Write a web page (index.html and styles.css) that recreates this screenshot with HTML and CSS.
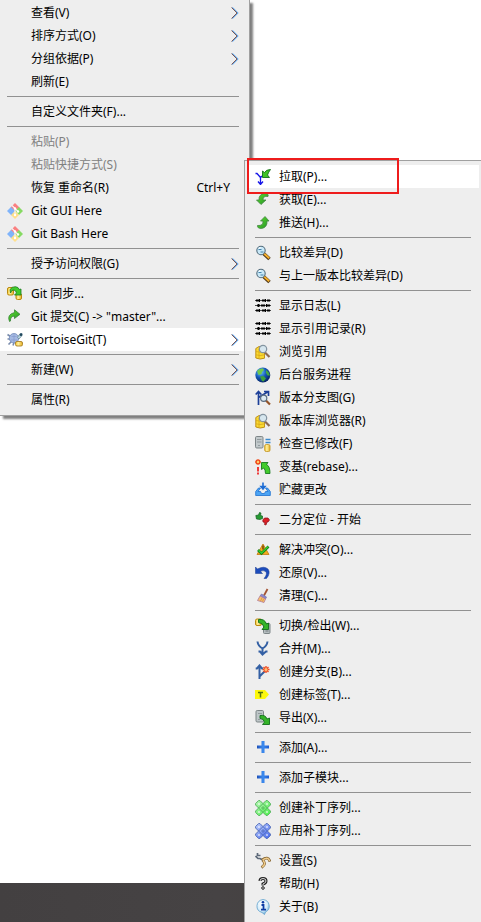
FILE: index.html
```html
<!DOCTYPE html>
<html lang="zh-Hans">
<head>
  <meta charset="UTF-8">
  <meta name="viewport" content="width=device-width, initial-scale=1.0">
  <title>TortoiseGit</title>
  <link rel="stylesheet" href="styles.css">
</head>
<body>
  <!-- icon set -->
  <svg class="sprite" aria-hidden="true">
    <defs>
      <linearGradient id="gGreen" x1="0" y1="0" x2="1" y2="1">
        <stop offset="0" stop-color="#5ee02a"/><stop offset="1" stop-color="#24912a"/>
      </linearGradient>
      <linearGradient id="gGold" x1="0" x2="1">
        <stop offset="0" stop-color="#f5c52c"/><stop offset=".4" stop-color="#fff0a0"/><stop offset="1" stop-color="#e6ae1c"/>
      </linearGradient>
      <linearGradient id="gBlue" x1="0" x2="1">
        <stop offset="0" stop-color="#1d50b8"/><stop offset=".5" stop-color="#3d8cf0"/><stop offset="1" stop-color="#1d5cd0"/>
      </linearGradient>
      <radialGradient id="gGlobe" cx=".35" cy=".3" r=".75">
        <stop offset="0" stop-color="#6cc8ff"/><stop offset=".5" stop-color="#1458b8"/><stop offset="1" stop-color="#06205c"/>
      </radialGradient>
      <radialGradient id="gBall" cx=".4" cy=".3" r=".75">
        <stop offset="0" stop-color="#fff"/><stop offset=".6" stop-color="#d4ecfa"/><stop offset="1" stop-color="#5fa4d4"/>
      </radialGradient>
      <linearGradient id="gPatchG" x1="0" y1="0" x2="1" y2="1">
        <stop offset="0" stop-color="#b8f4b8"/><stop offset="1" stop-color="#4cf04c"/>
      </linearGradient>
      <linearGradient id="gPatchB" x1="0" y1="0" x2="1" y2="1">
        <stop offset="0" stop-color="#c0d0fc"/><stop offset="1" stop-color="#4468ec"/>
      </linearGradient>
    </defs>

    <symbol id="arrow" viewBox="0 0 8 12">
      <path d="M1.200 .5 6.800 6 1.200 11.500" fill="none" stroke="#5fa8ee" stroke-width="1.200"/>
      <path d="M.5 .5 6 6 .5 11.500" fill="none" stroke="#7c3c28" stroke-width=".8"/>
    </symbol>

    <symbol id="git" viewBox="0 0 16 16">
      <path d="M8 0 12.500 4.500 8 8 3.500 4.500z" fill="#fa8080"/>
      <path d="M4 4 8 8 4.500 12.500 0 8z" fill="#80b4fa"/>
      <path d="M12 4 16 8 12 12 8 8z" fill="#86da62"/>
      <path d="M8 8 12 12 8 16 4 12z" fill="#ffe08c"/>
      <path d="M5 2.500 11 8.500M8 6v6.500" stroke="#f4f4f4" stroke-width="1.100"/>
      <circle cx="8" cy="5.500" r="1.200" fill="#fff"/><circle cx="11" cy="8.500" r="1.200" fill="#fff"/><circle cx="8" cy="12" r="1.200" fill="#fff"/>
    </symbol>
    <symbol id="sync" viewBox="0 0 16 16">
      <rect x=".5" y="1.500" width="6" height="7.500" rx="1.500" fill="url(#gGold)" stroke="#b88a10"/>
      <rect x="9" y="7.500" width="5.500" height="6" rx="1.500" fill="url(#gGold)" stroke="#b88a10"/>
      <path d="M3 3.500Q5 .5 8.500 .7 11.500 1 12.300 3.500L14 3v6H7.500l2-2Q9 4.500 7 4 4.500 3.500 3.500 7z" fill="#42cc2c" stroke="#187a20" stroke-width=".8"/>
    </symbol>
    <symbol id="commit" viewBox="0 0 16 16">
      <path d="M2.500 12.500Q-.5 5.500 7.500 3.500V.8L13 5.300 7.500 9.500V7Q3 7.500 3.500 12z" fill="url(#gGreen)" stroke="#3b843b" stroke-width=".8"/>
    </symbol>
    <symbol id="tortoise" viewBox="0 0 16 16">
      <path d="M.5 2.500 3.500 4.500M.5 7h3M1.500 12.500l3-3M6 13.500l1-3M10 11l-1-2" stroke="#7a8cac" stroke-width="1.600"/>
      <circle cx="7" cy="6.200" r="4.700" fill="#a5b9e2" stroke="#7088b8" stroke-width=".8"/>
      <path d="M4.500 4.500h5M4 8h6M7 2.500v8" stroke="#869cce" stroke-width=".7"/>
      <path d="M10.500 5.500Q12 1.500 15 1.500 16 3.500 12 7z" fill="#b4d4de" stroke="#6a8494" stroke-width=".7"/>
      <circle cx="14" cy="2.700" r="1.400" fill="#20485c"/>
      <rect x="8.500" y="9.500" width="7" height="4.500" rx="1.500" fill="url(#gGold)" stroke="#a88028" stroke-width=".9"/>
    </symbol>
    <symbol id="pull" viewBox="0 0 16 16">
      <path d="M.5 4.500H2l3.500 4 3.500-3M5.500 8.500v7M3 12.500l2.500 3 2.500-3" fill="none" stroke="#1616e8" stroke-width="1.300"/>
      <path d="M7.500 2 9.500 3.500Q11 .7 15.500 .5 13.500 3 12.500 6L14.500 8.500H7.500z" fill="#3fc424" stroke="#14701a" stroke-width=".9"/>
    </symbol>
    <symbol id="fetch" viewBox="0 0 16 16">
      <path d="M4 8Q3.500 2 10 1.500 14 1.500 13 4.500 8 3.500 8 8H11L6 12.500 1.500 8z" fill="url(#gGreen)" stroke="#448444" stroke-width=".8"/>
    </symbol>
    <symbol id="push" viewBox="0 0 16 16">
      <path d="M8 6H5.500L10 1.500 14 6H12Q12.500 12.500 6.500 13.500 2 13.500 2.500 10.500 8.500 11 8 6z" fill="url(#gGreen)" stroke="#448444" stroke-width=".8"/>
    </symbol>
    <symbol id="diff" viewBox="0 0 16 16">
      <path d="M8.500 8.500 14.500 14" stroke="#503818" stroke-width="3.600"/>
      <path d="M9 8.500 14.200 13.200" stroke="#f6b02c" stroke-width="1.900"/>
      <circle cx="6" cy="5.500" r="4.200" fill="#c8e8f8" stroke="#526c7c" stroke-width="1.100"/>
      <path d="M3.500 4.500h3M5.500 7h3" stroke="#4484ac"/>
      <path d="M4 3.500 5.500 2.500" stroke="#fff" stroke-width="1.500"/>
    </symbol>
    <symbol id="log" viewBox="0 0 16 16">
      <path d="M0 2.500h16M0 7.500h16M0 12.500h16" stroke="#4a4a4a"/>
      <path d="M1 2.500h4M7 2.500h3M12 2.500h3M2 7.500h3M6 7.500h4M12 7.500h3M1 12.500h4M7 12.500h3M12 12.500h3" stroke="#000" stroke-width="2"/>
      <path d="M4.500 1v3M10.500 1v3M3.500 6v3M11.500 6v3M4.500 11v3M10.500 11v3" stroke="#000"/>
    </symbol>
    <symbol id="browse" viewBox="0 0 16 16">
      <path d="M.8 4.500 4 2.500h5.500v11.700Q5 16 .8 14z" fill="#fad932" stroke="#b88810" stroke-width=".9"/>
      <path d="M1 7.500q4 1.500 8.500 0M1 10.800q4 1.500 8.500 0M4 5v9" fill="none" stroke="#d8a818" stroke-width=".8"/>
      <path d="M10 8.500 14.500 13" stroke="#8c6a50" stroke-width="2.200"/>
      <circle cx="8" cy="5" r="3.700" fill="#d6e6ee" stroke="#8494a0" stroke-width="1.200"/>
    </symbol>
    <symbol id="globe" viewBox="0 0 16 16">
      <circle cx="7.800" cy="8" r="7.500" fill="url(#gGlobe)"/>
      <path d="M2 4Q4 1 8 1.500L9 3 7 5 6.500 7 3.500 8z" fill="#70c84c"/>
      <path d="M5 9.500 8.500 9 11 11.500 8.500 14.500 7 14z" fill="#3fa03c"/>
      <path d="M11 3 13.500 5 15 8.500 12.500 8.500 11 6z" fill="#45a840"/>
    </symbol>
    <symbol id="graph" viewBox="0 0 16 16">
      <path d="M3.500 15V2M.7 4.500 3.500 1.500 6.300 4.500M3.500 7.500 12.500 2M9 1.500h4.500V6" fill="none" stroke="#1c3f98" stroke-width="1.700"/>
      <path d="M10.500 10 15 14.500" stroke="#945428" stroke-width="2.200"/>
      <circle cx="8.700" cy="8.300" r="3.100" fill="#dce9f2" stroke="#596c80" stroke-width="1.200"/>
    </symbol>
    <symbol id="check" viewBox="0 0 16 16">
      <rect x=".5" y=".5" width="7.500" height="11.500" rx="1.200" fill="#c2c9cb" stroke="#7d8587"/>
      <path d="M2 3.500h4.500M2 6h4.500M3 9.500h2" stroke="#929b9e"/>
      <path d="M10.500 3.500h5M10.500 6.500h5" stroke="#3c8acc" stroke-width="1.300"/>
      <rect x="9.700" y="8.500" width="5.300" height="7" rx="1.500" fill="url(#gGold)" stroke="#c49a30" stroke-width=".9"/>
    </symbol>
    <symbol id="rebase" viewBox="0 0 16 16">
      <path d="M3 0v6M0 3h6M1 1l4 4M5 1 1 5" stroke="#f04818" stroke-width="1.300"/>
      <circle cx="3" cy="3" r="1.200" fill="#ffd070"/>
      <path d="M3 8v4.500M3 13.500v2" stroke="#ee1c1c" stroke-width="1.700"/>
      <path d="M6.500 3.500H13L11.500 5.500Q15 7 15 14.500H10.500Q10.500 10.500 8.700 9L6.500 10.500z" fill="#42cc2c" stroke="#187a20" stroke-width=".9"/>
    </symbol>
    <symbol id="stash" viewBox="0 0 16 16">
      <path d="M3.500 6 .7 9.500V13.500H15.300V9.500L12.500 6H10.500L13 9.500H10.500L9.500 11.500H6.500L5.500 9.500H3L5.500 6z" fill="#4ca4f4" stroke="#1c70d0" stroke-width=".8"/>
      <path d="M8 .5v4M6 4.500 8 7 10 4.500z" fill="#1c6cd4" stroke="#1c6cd4" stroke-width="1.600"/>
    </symbol>
    <symbol id="bisect" viewBox="0 0 16 16">
      <path d="M.8 3.500 3.500 3 4.500 .5 6 1 5.500 3.500 7.500 4V6.500L5 7.500 1.500 7z" fill="#269a32" stroke="#126020" stroke-width=".7"/>
      <path d="M7.800 8 9.500 6H13L14.500 8 13 10H12L11 13 9.500 12.500 10 10.500 8 10z" fill="#dc2026" stroke="#8c0c14" stroke-width=".7"/>
    </symbol>
    <symbol id="resolve" viewBox="0 0 16 16">
      <path d="M8 2 14 12.500H2z" fill="#f5a91c" stroke="#c0780c" stroke-width=".8"/>
      <path d="M8 3.500v4" stroke="#5c3808" stroke-width="1.300"/>
      <path d="M3 8 6.500 11.500 13.500 4.500" fill="none" stroke="#147c18" stroke-width="2.600"/>
      <path d="M3.500 8.300 6.500 11.200 13 4.800" fill="none" stroke="#36d22e" stroke-width="1.300"/>
    </symbol>
    <symbol id="revert" viewBox="0 0 16 16">
      <path d="M.5 2 2.500 4Q9 .5 13 4 16 8 11.500 13.500H9Q13 8.500 10.500 6.500 8 4.700 5.500 6.500L7.500 8.500H.5z" fill="#1c4cbc" stroke="#163890" stroke-width=".5"/>
    </symbol>
    <symbol id="clean" viewBox="0 0 16 16">
      <path d="M12.500 1 9 7.500" stroke="#a45434" stroke-width="1.800"/>
      <path d="M6.500 6 11.500 9 10.500 11 5 8z" fill="#8c88cc" stroke="#6864a4" stroke-width=".6"/>
      <path d="M5 8 10.500 11 9 14.500 2.500 12.500z" fill="#f9c26a" stroke="#b0789c" stroke-width=".8"/>
      <path d="M5.500 13 7 10M7.500 13.500 8.500 11" stroke="#d08c48" stroke-width=".8"/>
    </symbol>
    <symbol id="switch" viewBox="0 0 16 16">
      <rect x=".5" y="1" width="6" height="6.500" rx="1.500" fill="url(#gGold)" stroke="#b88a10"/>
      <rect x="8.500" y="5.500" width="6.500" height="10" rx="1" fill="#b4bcbe" stroke="#7d8587"/>
      <path d="M10.500 13h3" stroke="#727a7c"/>
      <path d="M3.500 1.500Q9.500 .5 11.500 6L13.500 5V11.500H7L9 9Q8 5 3.500 4.500z" fill="#34b428" stroke="#126c1c" stroke-width=".9"/>
    </symbol>
    <symbol id="merge" viewBox="0 0 16 16">
      <path d="M2.500 .5Q3 5 7.500 7.500V14M12.500 .5Q12 5 7.500 7.500M3.500 10.500H5L7.500 13.500 11 10.500H12.500" fill="none" stroke="#3460a4" stroke-width="2"/>
    </symbol>
    <symbol id="branch" viewBox="0 0 16 16">
      <path d="M4.500 15V1.500M.7 4.500H2L4.500 1.500 7 4.500H8.300M4.500 12.500 9.500 7.500" fill="none" stroke="#3460a4" stroke-width="2"/>
      <path d="M11 2v7M7.500 5.500h7M8.500 3l5 5M13.500 3l-5 5" stroke="#f04c20" stroke-width="1.400"/>
      <circle cx="11" cy="5.500" r="1.500" fill="#ffc074"/>
    </symbol>
    <symbol id="tag" viewBox="0 0 16 16">
      <path d="M0 3H10L14 7.500 10 12H0z" fill="#fcf80c"/>
      <path d="M3 5.500h5M5.500 5.500v5" stroke="#54740c" stroke-width="1.500"/>
    </symbol>
    <symbol id="export" viewBox="0 0 16 16">
      <rect x="1" y=".5" width="7.500" height="11.500" rx="1.200" fill="#bec6c8" stroke="#7d8587"/>
      <path d="M3 3.500h4M3 9.500h2" stroke="#929b9e"/>
      <path d="M5 5.500Q10.500 4.500 12 9L14.500 8V14.500H7.500L9.500 12Q8.500 8.500 5 8.500z" fill="#34b428" stroke="#126c1c" stroke-width=".9"/>
    </symbol>
    <symbol id="add" viewBox="0 0 16 16">
      <path d="M6.500 1h3v4.500H14v3H9.500V13h-3V8.500H2v-3h4.500z" fill="url(#gBlue)"/>
    </symbol>
    <symbol id="patch" viewBox="0 0 16 16">
      <path d="M3.500 .6H5L8 3.600 11 .6H12.500L15.400 3.500V5L12.400 8 15.400 11V12.500L12.500 15.400H11L8 12.400 5 15.400H3.500L.6 12.500V11L3.600 8 .6 5V3.500z" stroke-width=".9"/>
      <path d="M8 3.600 12.400 8 8 12.400 3.600 8z" stroke-width=".9"/>
      <path d="M3 4h2M4 3v2M11 4h2M12 3v2M3 12h2M4 11v2M11 12h2M12 11v2" stroke="#fff" stroke-width=".6"/>
      <path d="M6 8h4M8 6v4" stroke-width=".7"/>
    </symbol>
    <symbol id="settings" viewBox="0 0 16 16">
      <path d="M2.500 0V2.500H5.500M.5 3 3 5.500H5L8.500 7.500" fill="none" stroke="#5c6878" stroke-width="1.700"/>
      <path d="M7 7Q13 2.500 15 8.500M7.500 7Q12 11 6.500 14.500" fill="none" stroke="#80602c" stroke-width="2.800"/>
      <path d="M7.500 7Q13 3 14.700 8M8 7.500Q11.700 11 7 14" fill="none" stroke="#f0cc8c" stroke-width="1.500"/>
    </symbol>
    <symbol id="help" viewBox="0 0 16 16">
      <path d="M5 5Q5 2.500 8 2.500 11 2.500 11 5 11 7 8 8V9.500" fill="none" stroke="#222" stroke-width="3"/>
      <path d="M5 5Q5 2.500 8 2.500 11 2.500 11 5 11 7 8 8V9" fill="none" stroke="#ddd" stroke-width="1"/>
      <circle cx="8" cy="12" r="1.300" fill="#ddd" stroke="#222"/>
    </symbol>
    <symbol id="about" viewBox="0 0 16 16">
      <path d="M8 .5A7.200 6.700 0 0 1 10.500 13L9.500 15.500 7 13.500A7.200 6.700 0 0 1 8 .5z" fill="url(#gBall)" stroke="#6ca8d0" stroke-width=".9"/>
      <path d="M6.500 6H8.500V10.500M6 10.700h5" fill="none" stroke="#0c3ca4" stroke-width="1.800"/>
      <circle cx="8" cy="3.300" r="1.300" fill="#0c3ca4"/>
    </symbol>
  </svg>

  <main class="desktop">
    <ul class="menu">
      <li><button class="item"><span class="icon"></span>查看(V)<svg class="more"><use href="#arrow"/></svg></button></li>
      <li><button class="item"><span class="icon"></span>排序方式(O)<svg class="more"><use href="#arrow"/></svg></button></li>
      <li><button class="item"><span class="icon"></span>分组依据(P)<svg class="more"><use href="#arrow"/></svg></button></li>
      <li><button class="item"><span class="icon"></span>刷新(E)</button></li>
      <li class="line"></li>
      <li><button class="item"><span class="icon"></span>自定义文件夹(F)...</button></li>
      <li class="line"></li>
      <li><button class="item" disabled><span class="icon"></span>粘贴(P)</button></li>
      <li><button class="item" disabled><span class="icon"></span>粘贴快捷方式(S)</button></li>
      <li><button class="item"><span class="icon"></span>恢复 重命名(R)<span class="key">Ctrl+Y</span></button></li>
      <li><button class="item"><svg class="icon"><use href="#git"/></svg>Git GUI Here</button></li>
      <li><button class="item"><svg class="icon"><use href="#git"/></svg>Git Bash Here</button></li>
      <li class="line"></li>
      <li><button class="item"><span class="icon"></span>授予访问权限(G)<svg class="more"><use href="#arrow"/></svg></button></li>
      <li class="line"></li>
      <li><button class="item"><svg class="icon"><use href="#sync"/></svg>Git 同步...</button></li>
      <li><button class="item"><svg class="icon"><use href="#commit"/></svg>Git 提交(C) -&gt; "master"...</button></li>
      <li><button class="item active"><svg class="icon"><use href="#tortoise"/></svg>TortoiseGit(T)<svg class="more"><use href="#arrow"/></svg></button></li>
      <li class="line"></li>
      <li><button class="item"><span class="icon"></span>新建(W)<svg class="more"><use href="#arrow"/></svg></button></li>
      <li class="line"></li>
      <li><button class="item"><span class="icon"></span>属性(R)</button></li>
    </ul>

    <div class="taskbar"></div>

    <ul class="menu submenu">
      <li><button class="item active"><svg class="icon"><use href="#pull"/></svg>拉取(P)...</button></li>
      <li><button class="item"><svg class="icon"><use href="#fetch"/></svg>获取(E)...</button></li>
      <li><button class="item"><svg class="icon"><use href="#push"/></svg>推送(H)...</button></li>
      <li class="line"></li>
      <li><button class="item"><svg class="icon"><use href="#diff"/></svg>比较差异(D)</button></li>
      <li><button class="item"><svg class="icon"><use href="#diff"/></svg>与上一版本比较差异(D)</button></li>
      <li class="line"></li>
      <li><button class="item"><svg class="icon"><use href="#log"/></svg>显示日志(L)</button></li>
      <li><button class="item"><svg class="icon"><use href="#log"/></svg>显示引用记录(R)</button></li>
      <li><button class="item"><svg class="icon"><use href="#browse"/></svg>浏览引用</button></li>
      <li><button class="item"><svg class="icon"><use href="#globe"/></svg>后台服务进程</button></li>
      <li><button class="item"><svg class="icon"><use href="#graph"/></svg>版本分支图(G)</button></li>
      <li><button class="item"><svg class="icon"><use href="#browse"/></svg>版本库浏览器(R)</button></li>
      <li><button class="item"><svg class="icon"><use href="#check"/></svg>检查已修改(F)</button></li>
      <li><button class="item"><svg class="icon"><use href="#rebase"/></svg>变基(rebase)...</button></li>
      <li><button class="item"><svg class="icon"><use href="#stash"/></svg>贮藏更改</button></li>
      <li class="line"></li>
      <li><button class="item"><svg class="icon"><use href="#bisect"/></svg>二分定位 - 开始</button></li>
      <li class="line"></li>
      <li><button class="item"><svg class="icon"><use href="#resolve"/></svg>解决冲突(O)...</button></li>
      <li><button class="item"><svg class="icon"><use href="#revert"/></svg>还原(V)...</button></li>
      <li><button class="item"><svg class="icon"><use href="#clean"/></svg>清理(C)...</button></li>
      <li class="line"></li>
      <li><button class="item"><svg class="icon"><use href="#switch"/></svg>切换/检出(W)...</button></li>
      <li><button class="item"><svg class="icon"><use href="#merge"/></svg>合并(M)...</button></li>
      <li><button class="item"><svg class="icon"><use href="#branch"/></svg>创建分支(B)...</button></li>
      <li><button class="item"><svg class="icon"><use href="#tag"/></svg>创建标签(T)...</button></li>
      <li><button class="item"><svg class="icon"><use href="#export"/></svg>导出(X)...</button></li>
      <li class="line"></li>
      <li><button class="item"><svg class="icon"><use href="#add"/></svg>添加(A)...</button></li>
      <li class="line"></li>
      <li><button class="item"><svg class="icon"><use href="#add"/></svg>添加子模块...</button></li>
      <li class="line"></li>
      <li><button class="item"><svg class="icon patch-green"><use href="#patch"/></svg>创建补丁序列...</button></li>
      <li><button class="item"><svg class="icon patch-blue"><use href="#patch"/></svg>应用补丁序列...</button></li>
      <li class="line"></li>
      <li><button class="item"><svg class="icon"><use href="#settings"/></svg>设置(S)</button></li>
      <li><button class="item"><svg class="icon"><use href="#help"/></svg>帮助(H)</button></li>
      <li><button class="item"><svg class="icon"><use href="#about"/></svg>关于(B)</button></li>
      <li class="mark"></li>
    </ul>
  </main>
</body>
</html>
```
FILE: styles.css
```css
* {
  box-sizing: border-box;
}
body {
  margin: 0;
  background-color: #fff;
  font-family: "Noto Sans", "Noto Sans CJK SC", sans-serif;
  font-size: 12px;
}
.sprite {
  position: absolute;
  width: 0;
  height: 0;
}
.desktop {
  position: relative;
  display: flex;
  flex-direction: column;
  justify-content: space-between;
  align-items: flex-start;
  min-height: 100vh;
}
.menu {
  width: 250px;
  margin: 0;
  padding: 1px 2px 4px 0;
  list-style: none;
  background-color: #eee;
  border: 1px solid #a0a0a0;
  border-width: 0 1px 1px 0;
  box-shadow: 3px 3px 2px rgba(0, 0, 0, 0.5);
}
/* flyout of the TortoiseGit entry */
.submenu {
  position: absolute;
  top: 160px;
  left: 244px;
  right: 0;
  width: auto;
  padding: 4px 2px 4px 3px;
  border-width: 1px 0 0 1px;
  box-shadow: none;
}
.item {
  display: flex;
  align-items: center;
  gap: 8px;
  width: 100%;
  height: 23px;
  padding: 0 8px 0 7px;
  border: 0;
  background: none;
  color: #000;
  font: inherit;
  line-height: 23px;
  text-align: left;
  white-space: pre;
}
.item:disabled {
  color: #808080;
}
.item.active {
  background-color: #fff;
}
.icon {
  flex: none;
  width: 16px;
  height: 16px;
}
.more {
  width: 8px;
  height: 12px;
  margin-left: auto;
}
.key {
  margin-left: auto;
  padding-right: 9px;
}
.line {
  height: 1px;
  margin: 3px 8px 3px 7px;
  background-color: #919191;
}
.patch-green {
  fill: url(#gPatchG);
  stroke: #4fae58;
}
.patch-blue {
  fill: url(#gPatchB);
  stroke: #4c68b4;
}
/* red frame round the first entry */
.mark {
  position: absolute;
  top: -3px;
  left: 2px;
  width: 152px;
  height: 36px;
  border: 2px solid #ee1c1c;
  pointer-events: none;
}
.taskbar {
  width: 100%;
  height: 39px;
  background: linear-gradient(90deg, #434041, #464344 45%, #453f3b);
}
```
